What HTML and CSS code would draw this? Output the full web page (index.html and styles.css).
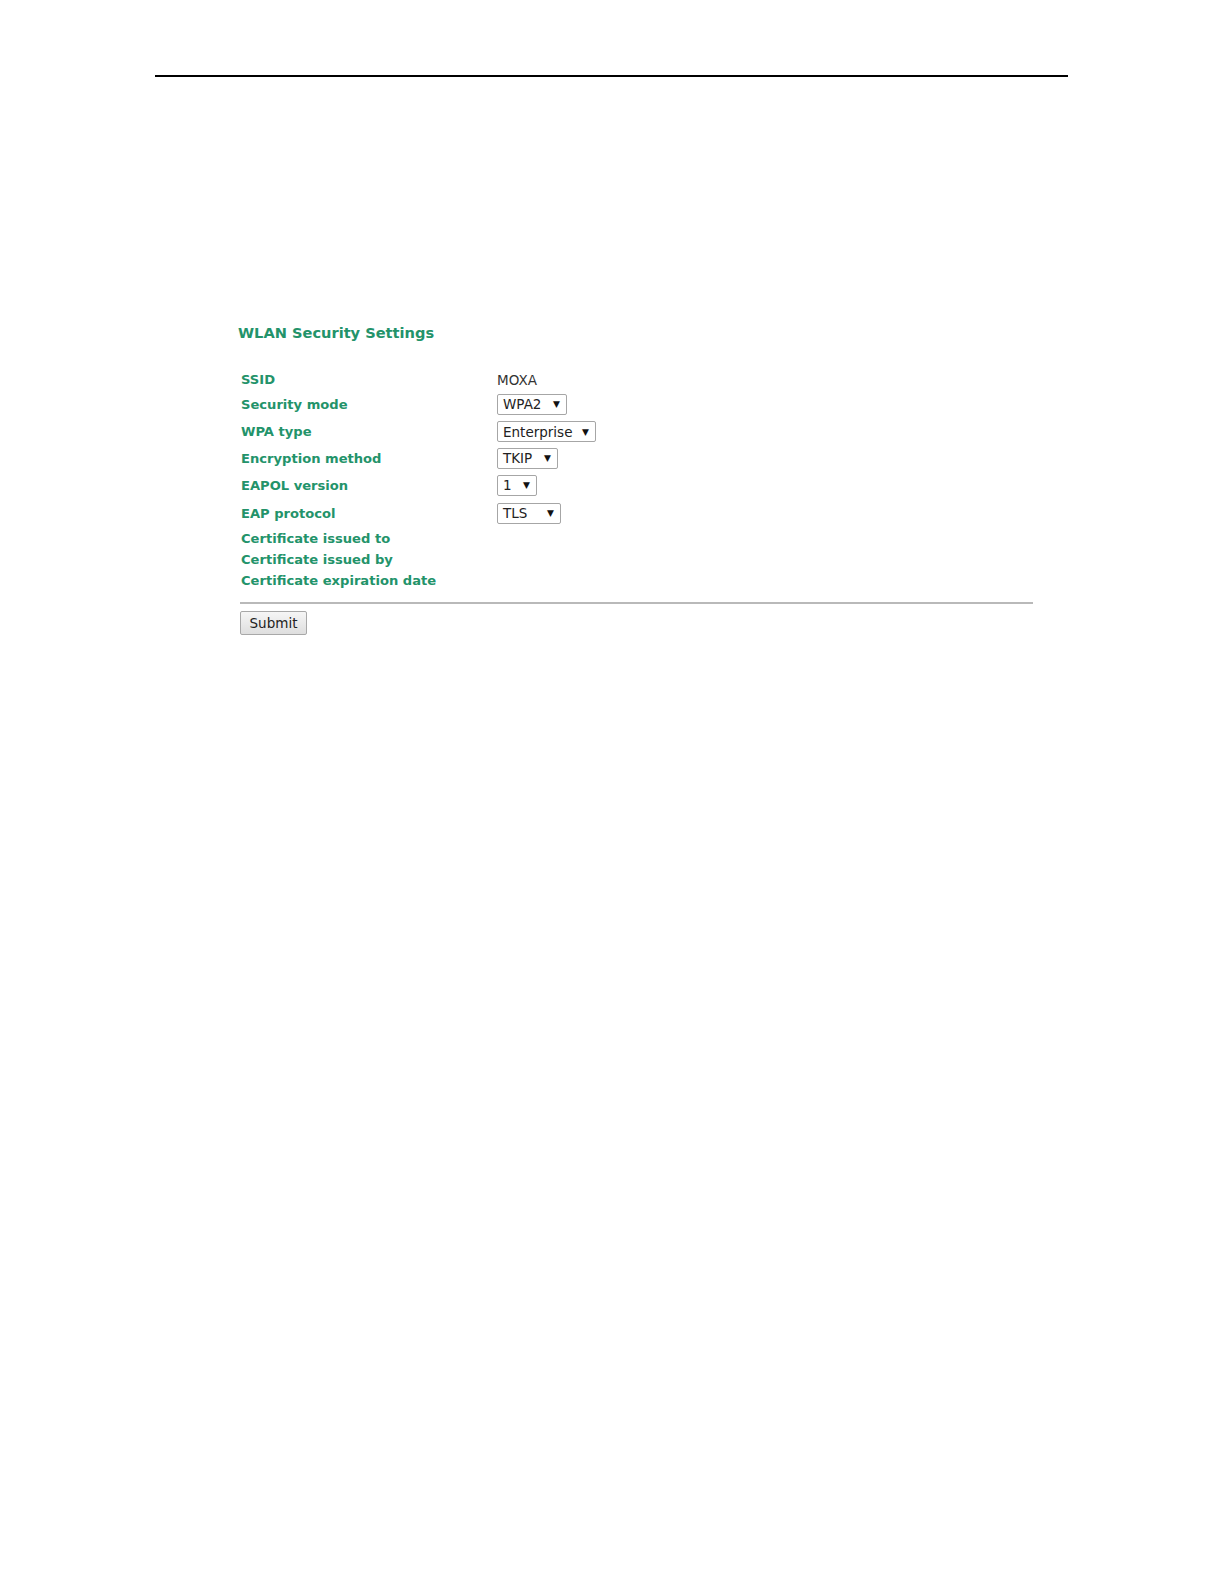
FILE: index.html
```html
<!DOCTYPE html>
<html>
<head>
<meta charset="utf-8">
<link rel="stylesheet" href="styles.css">
</head>
<body>
<div class="page">
  <header class="top-rule"></header>
  <main class="panel">
    <h1 class="title">WLAN Security Settings</h1>
    <div class="form">
      <div class="label">SSID</div>
      <div class="value"><span class="text">MOXA</span></div>
      <div class="label">Security mode</div>
      <div class="value"><span class="select w-wpa2">WPA2<i class="arrow">▼</i></span></div>
      <div class="label">WPA type</div>
      <div class="value"><span class="select w-ent">Enterprise<i class="arrow">▼</i></span></div>
      <div class="label">Encryption method</div>
      <div class="value"><span class="select w-tkip">TKIP<i class="arrow">▼</i></span></div>
      <div class="label">EAPOL version</div>
      <div class="value"><span class="select w-one">1<i class="arrow">▼</i></span></div>
      <div class="label">EAP protocol</div>
      <div class="value"><span class="select w-tls">TLS<i class="arrow">▼</i></span></div>
      <div class="label">Certificate issued to</div>
      <div class="value"></div>
      <div class="label">Certificate issued by</div>
      <div class="value"></div>
      <div class="label">Certificate expiration date</div>
      <div class="value"></div>
    </div>
    <hr class="sep">
    <button class="submit" type="button">Submit</button>
  </main>
  <footer class="foot-rule"></footer>
</div>
</body>
</html>
```

FILE: styles.css
```css
html, body {
  margin: 0;
  padding: 0;
  background: #ffffff;
}

.page {
  width: 1224px;
  height: 1584px;
  position: relative;
  font-family: "DejaVu Sans", Verdana, sans-serif;
}

.top-rule {
  margin: 75px 0 0 155px;
  width: 913px;
  height: 2px;
  background: #000;
}

.panel {
  margin-left: 238px;
  padding-top: 247px;
  width: 800px;
}

.title {
  margin: 0;
  font-size: 14.6px;
  font-weight: bold;
  color: #23936a;
  line-height: 18px;
}

.form {
  margin-top: 27px;
  margin-left: 3px;
  display: grid;
  grid-template-columns: 256px 1fr;
  grid-template-rows: 21px 28px 27px 26px 28px 28px 22px 21px 21px;
}

.label {
  display: flex;
  align-items: center;
  font-size: 13.1px;
  font-weight: bold;
  color: #23936a;
  white-space: nowrap;
}

.value {
  display: flex;
  align-items: center;
  font-size: 13.5px;
  color: #333;
}

.select {
  box-sizing: border-box;
  height: 21px;
  display: inline-flex;
  align-items: center;
  justify-content: space-between;
  padding: 0 6px 0 5px;
  border: 1px solid #a6a6a6;
  border-radius: 2px;
  background: #fff;
  color: #222;
  font-size: 13.5px;
}

.arrow {
  font-style: normal;
  font-size: 9px;
  color: #111;
}

.w-wpa2 { width: 70px; }
.w-ent { width: 99px; }
.w-tkip { width: 61px; }
.w-one { width: 40px; }
.w-tls { width: 64px; }

.sep {
  margin: 11px 0 0 2px;
  width: 793px;
  height: 0;
  border: 0;
  border-top: 2px solid #b9b9b9;
}

.submit {
  display: block;
  margin: 7px 0 0 2px;
  box-sizing: border-box;
  width: 67px;
  height: 24px;
  padding: 0;
  border: 1px solid #a8a8a8;
  border-radius: 2px;
  background: linear-gradient(#f6f6f6, #dedede);
  font-family: "DejaVu Sans", Verdana, sans-serif;
  font-size: 13.5px;
  color: #222;
}

.foot-rule {
  position: absolute;
  left: 127px;
  top: 1571px;
  width: 142px;
  height: 1px;
  background: #eef0f8;
}
```
